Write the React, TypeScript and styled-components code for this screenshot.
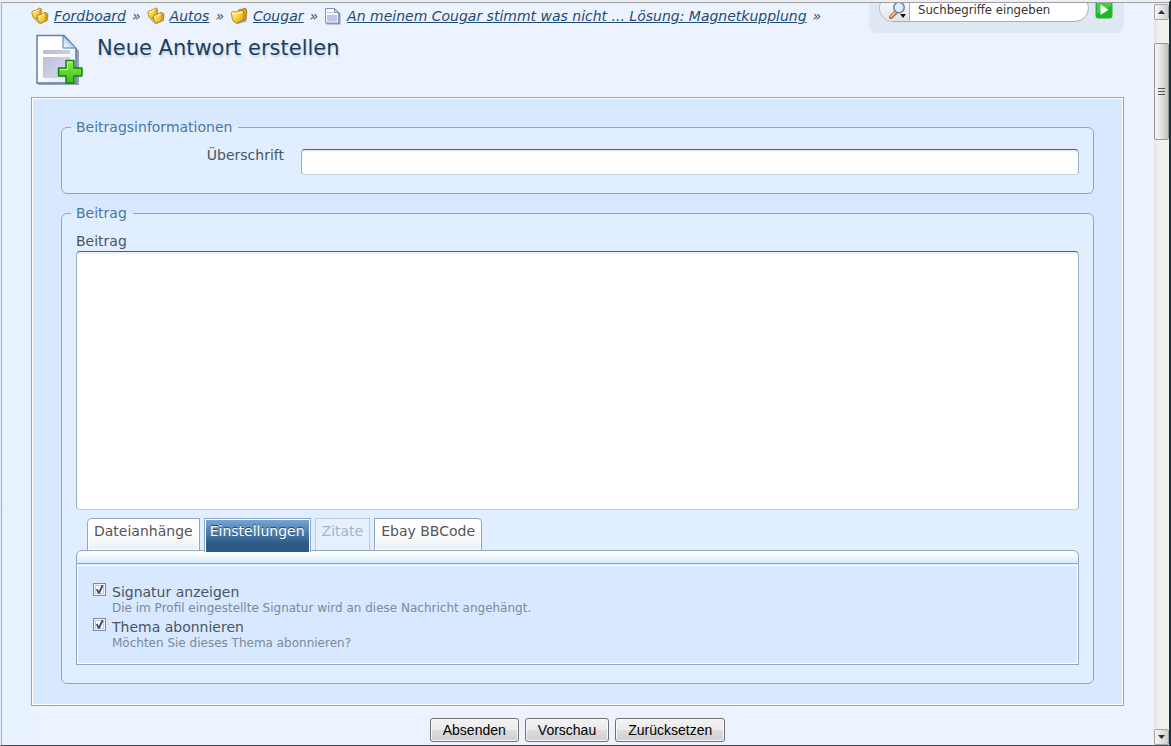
import React from 'react';
import styled, { createGlobalStyle, css } from 'styled-components';

const GlobalStyle = createGlobalStyle`
  *, *::before, *::after { box-sizing: border-box; }
  body {
    margin: 0;
    background: #eaf3ff;
    color: #4a5560;
    font: 14px/16px "DejaVu Sans", Verdana, sans-serif;
  }
`;

const line = '#8fa8c2';

const Window = styled.div`
  display: flex;
  min-height: 100vh;
  border-top: 2px solid #eeeeee;
  border-right: 2px solid #1f2d40;
  border-bottom: 1px solid #444b55;
  border-left: 1px solid #e6eaf0;
`;

const Page = styled.div`
  flex: 1;
  min-width: 0;
  padding: 0 30px 3px 29px;
  overflow: hidden;
  border-top: 1px solid #9a9fa8;
  border-left: 1px solid #9fb2c8;
  background: linear-gradient(90deg, #e6f2ff, #ecf3ff 60px);
`;

const Header = styled.header`
  display: flex;
  justify-content: space-between;
  align-items: flex-start;
  height: 31px;
`;

const Crumbs = styled.ol`
  display: flex;
  gap: 6px;
  margin: 0;
  padding: 4px 0 0;
  list-style: none;
  white-space: nowrap;
`;

const Crumb = styled.li`
  display: flex;
  align-items: center;
  gap: 5px;
  height: 18px;
  svg { flex: none; }
`;

const CrumbLink = styled.a`
  color: #1f4b73;
  font-style: italic;
  text-decoration: underline;
`;

const Separator = styled.span`
  padding-left: 1px;
  font-style: italic;
`;

const Search = styled.form`
  display: flex;
  gap: 6px;
  width: 255px;
  flex: none;
  margin-top: -12px;
  padding: 3px 10px 11px;
  border-radius: 8px;
  background: #dde8f3;
`;

const Pill = styled.div`
  display: flex;
  width: 210px;
  height: 28px;
  overflow: hidden;
  border: 1px solid #a9b0b8;
  border-radius: 14px;
  background: #ffffff;
`;

const SearchScope = styled.button`
  width: 30px;
  padding: 6px 0 0 5px;
  border: 0;
  border-right: 1px solid #a9b0b8;
  background: linear-gradient(#ffffff, #e4e4e4);
`;

const SearchInput = styled.input`
  flex: 1;
  min-width: 0;
  padding: 3px 8px 0;
  border: 0;
  background: transparent;
  color: #333333;
  font: 13px/16px "DejaVu Sans Condensed", "DejaVu Sans", sans-serif;
  &::placeholder { color: #333333; opacity: 1; }
`;

const GoButton = styled.button`
  align-self: center;
  width: 18px;
  height: 18px;
  margin-top: 3px;
  padding: 0;
  border: 0;
  background: none;
`;

const TitleRow = styled.div`
  display: flex;
  gap: 14px;
  height: 63px;
  padding-left: 3px;
`;

const Title = styled.h1`
  margin: 2px 0 0;
  color: #1c3e5c;
  font-size: 21px;
  font-weight: 400;
  line-height: 24px;
  text-shadow: 1px 2px 2px #c4d2e0;
`;

const Frame = styled.div`
  padding: 21px 29px;
  border: 1px solid ${line};
  outline: 1px solid #ffffff;
  outline-offset: -2px;
  background: #d7e8ff;
`;

const Group = styled.fieldset`
  min-width: 0;
  margin: 0;
  padding: 12px 14px 18px;
  border: 1px solid ${line};
  border-radius: 6px;
  background: #e1eeff;
  & + & { margin-top: 11px; }
`;

const Legend = styled.legend`
  margin-left: -5px;
  padding: 0 6px 0 5px;
  color: #4b77a5;
`;

const SubjectRow = styled.div`
  display: grid;
  grid-template-columns: 208px 1fr;
  gap: 17px;
`;

const SubjectLabel = styled.label`
  text-align: right;
`;

const field = css`
  display: block;
  width: 100%;
  border: 1px solid #9fb2c8;
  border-top-color: #55606c;
  border-bottom-color: #c3cedb;
  border-radius: 4px;
  background: #ffffff;
  box-shadow: inset 0 2px 2px #eeeeee;
  font: inherit;
`;

const SubjectInput = styled.input`
  ${field}
  height: 26px;
  margin-top: 2px;
`;

const MessageLabel = styled.label`
  display: block;
  margin-bottom: 2px;
`;

const Message = styled.textarea`
  ${field}
  height: 259px;
  resize: none;
`;

const Tabs = styled.div`
  display: flex;
  gap: 4px;
  margin-top: 8px;
  padding-left: 11px;
`;

const Tab = styled.button<{ $edge?: 'left' | 'right' }>`
  height: 32px;
  padding: 0 6px 8px;
  border: 1px solid ${line};
  border-bottom: 0;
  border-radius: ${p => (p.$edge === 'left' ? '5px 0 0 0' : p.$edge === 'right' ? '0 5px 0 0' : '0')};
  background: linear-gradient(#ffffff 40%, #eaf0f3);
  box-shadow: inset 0 0 0 1px #ffffff;
  color: #555555;
  font: inherit;

  &[aria-selected='true'] {
    height: 34px;
    margin-bottom: -2px;
    padding: 0 5px 10px;
    z-index: 1;
    background: linear-gradient(#79a8d6, #2a5a85 75%);
    box-shadow: inset 1px 1px #ffffff, inset -1px 0 #ffffff;
    color: #ffffff;
    text-shadow: 0 -1px #1e4770;
  }

  &:disabled {
    border-color: #b9cde3;
    background: #e6f0fc;
    box-shadow: none;
    color: #a3b5ca;
  }
`;

const PanelCap = styled.div`
  height: 14px;
  border: 1px solid ${line};
  border-radius: 6px 6px 0 0;
  background: linear-gradient(#ffffff 20%, #d4ebfb);
`;

const Panel = styled.div`
  padding: 18px 16px 12px;
  border: 1px solid ${line};
  border-top: 0;
  outline: 1px solid #ffffff;
  outline-offset: -2px;
  background: #d7e8ff;
`;

const Option = styled.div`
  display: grid;
  grid-template-columns: 13px 1fr;
  column-gap: 6px;
  height: 35px;
`;

const Check = styled.input`
  appearance: none;
  width: 13px;
  height: 13px;
  margin: 1px 0 0;
  border: 1px solid #7d8a99;
  background: #ffffff;
  box-shadow: inset 0 0 0 1px #f4f4f4, inset 0 0 0 2px #c3cad3;
  &:checked::after {
    content: '';
    display: block;
    width: 9px;
    height: 9px;
    margin: 1px;
    background: #3c4a86;
    clip-path: polygon(10% 50%, 28% 42%, 42% 66%, 74% 0, 96% 6%, 52% 96%, 34% 96%);
  }
`;

const OptionText = styled.div`
  padding-top: 2px;
`;

const Hint = styled.div`
  color: #7d8a99;
  font-size: 12px;
`;

const Actions = styled.div`
  display: flex;
  justify-content: center;
  gap: 6px;
  margin-top: 12px;
`;

const Action = styled.button`
  height: 24px;
  padding: 0 12px;
  border: 1px solid #707070;
  border-radius: 3px;
  background: linear-gradient(#f2f2f2 0, #ebebeb 50%, #dddddd 50%, #cfcfcf);
  box-shadow: inset 0 0 0 1px #fafafa;
  color: #000000;
  font: 14px/16px "Liberation Sans", Arial, sans-serif;
`;

const Scrollbar = styled.div`
  display: flex;
  flex-direction: column;
  width: 15px;
  flex: none;
  padding-top: 1px;
  border-top: 1px solid #9a9fa8;
  background: linear-gradient(90deg, #e3e3e3, #f0f0f0 4px);
`;

const ScrollArrow = styled.button`
  display: grid;
  place-items: center;
  width: 15px;
  height: 16px;
  padding: 0;
  border: 1px solid #a4a4a4;
  border-radius: 2px;
  background: linear-gradient(90deg, #f6f6f6, #cfcfcf);
`;

const Track = styled.div`
  flex: 1;
  padding-top: 23px;
`;

const Thumb = styled.div`
  display: grid;
  place-items: center;
  height: 97px;
  border: 1px solid #979797;
  border-radius: 2px;
  background: linear-gradient(90deg, #f6f6f6, #e4e4e4 45%, #c2c2c2);
`;

const GoldFill = ({ id }: { id: string }) => (
  <defs>
    <linearGradient id={id} x1="0" y1="0" x2="1" y2="1">
      <stop offset="0" stopColor="#fff3a0" />
      <stop offset="0.45" stopColor="#fbd548" />
      <stop offset="1" stopColor="#d99a14" />
    </linearGradient>
  </defs>
);

const BoardsIcon = ({ id }: { id: string }) => (
  <svg width="18" height="18" viewBox="0 0 18 18" aria-hidden="true">
    <GoldFill id={id} />
    <path d="M3 12.500 8.500 17.500 17 14 17.600 8 14 7Z" fill="#7b8496" opacity=".45" />
    <path d="M.8 4.800 2.500 3.500 4 3.600 8.500 1 10.500 2 10.800 8 4.500 12 2 10.500Z" fill={`url(#${id})`} stroke="#a87d18" strokeWidth=".8" />
    <path d="M8.500 1 10.500 2 10.800 8 8.500 9.500Z" fill="#d89c1c" />
    <path d="M6 9.300 7.800 8 9.300 8.200 14 5.400 16.800 6.600 16 13 9.500 16.400 7.200 14.600Z" fill={`url(#${id})`} stroke="#98700f" strokeWidth=".8" />
    <path d="M14 5.800 16.500 6.800 15.700 12.800 13.500 14Z" fill="#d89c1c" />
    <path d="M2 5.200 7.500 3M7.500 9.600 13 7.200" stroke="#fffbd0" />
  </svg>
);

const BoardIcon = () => (
  <svg width="18" height="18" viewBox="0 0 18 18" aria-hidden="true">
    <GoldFill id="board" />
    <path d="M3 14.500 7 17.500 16.500 15 17.500 4Z" fill="#7b8496" opacity=".45" />
    <path d="M8 4 10 2 11.500 2.600 15 1 16.600 2.500 15.600 13 7 16Z" fill="#e0a31d" stroke="#8f6a12" strokeWidth=".8" />
    <path d="M1 6 2.500 4.500 6 5 7.500 4 13.500 3.600 13.300 13 6.500 16.200 2.800 13.500Z" fill="url(#board)" stroke="#a87d18" strokeWidth=".8" />
    <path d="M2.500 6.500 6.500 6.800 12.500 4.800" fill="none" stroke="#fffbd0" />
  </svg>
);

const ThreadIcon = () => (
  <svg width="18" height="18" viewBox="0 0 18 18" aria-hidden="true">
    <path d="M2.500 2.500h9l5 4v11h-14Z" fill="#7d8698" opacity=".8" />
    <path d="M1.500 1.500h9l4 4v10.500h-13Z" fill="#f7faff" stroke="#8592a8" />
    <path d="M10.500 1.500v4h4Z" fill="#c9def5" stroke="#5f7f9e" strokeWidth=".8" />
    <path d="M3 5h6v1H3ZM3 8h10v6.500H3Z" fill="#bcc6e0" />
  </svg>
);

const AddPostIcon = () => (
  <svg width="49" height="52" viewBox="0 0 49 52" aria-hidden="true">
    <defs>
      <linearGradient id="sheet" x1="0" y1="0" x2="1" y2="1">
        <stop offset="0.4" stopColor="#ffffff" />
        <stop offset="1" stopColor="#dce4f2" />
      </linearGradient>
      <linearGradient id="lines" x1="0" y1="0" x2="1" y2="1">
        <stop offset="0" stopColor="#b5bcda" />
        <stop offset="1" stopColor="#d9ddee" />
      </linearGradient>
      <linearGradient id="fold" x1="0" y1="1" x2="1" y2="0">
        <stop offset="0" stopColor="#ffffff" />
        <stop offset="1" stopColor="#6fa9d5" />
      </linearGradient>
      <linearGradient id="plus" x1="0" y1="0" x2="0" y2="1">
        <stop offset="0" stopColor="#8df04a" />
        <stop offset="1" stopColor="#35bf16" />
      </linearGradient>
    </defs>
    <path d="M4 3h28l13 14v34H4Z" fill="#5c6b86" opacity=".6" />
    <path d="M3 1.500h27l12 13V49H3Z" fill="url(#sheet)" stroke="#6680a5" strokeWidth="1.500" />
    <path d="M29 1.500v12.500h13Z" fill="url(#fold)" stroke="#4c7ca8" />
    <path d="M9 16h27v4H9ZM9 23h27v21H9Z" fill="url(#lines)" />
    <path d="M32 26.500h8v7.500h8v8h-8V49h-8v-7h-7.500v-8H32Z" fill="url(#plus)" stroke="#16801c" strokeWidth="1.500" strokeLinejoin="round" />
    <path d="M33.500 35.500v-7.500h5M26 35.500h7.500" fill="none" stroke="#b7f98c" />
  </svg>
);

const SearchIcon = () => (
  <svg width="19" height="19" viewBox="0 0 19 19" aria-hidden="true">
    <path d="M8 11 3 16" stroke="#a86b3c" strokeWidth="4" strokeLinecap="round" />
    <path d="M8 10.500 3 15.500" stroke="#f0b487" strokeWidth="2" strokeLinecap="round" />
    <circle cx="11" cy="6.500" r="5.200" fill="#dcecfb" stroke="#6c7f9c" strokeWidth="1.500" />
    <path d="M12 13h6l-3 4Z" fill="#111111" />
  </svg>
);

const GoIcon = () => (
  <svg width="18" height="18" viewBox="0 0 18 18" aria-hidden="true">
    <rect x="1" y="1" width="16" height="16" rx="2" fill="#14bd24" stroke="#4c9c55" />
    <path d="M2 2h14v3L2 13Z" fill="#55df5a" opacity=".6" />
    <path d="M5.500 3.500v10.500l8-5.250Z" fill="#ffffff" />
  </svg>
);

const Arrow = ({ d }: { d: string }) => (
  <svg width="7" height="4" viewBox="0 0 7 4" aria-hidden="true"><path d={d} fill="#333333" /></svg>
);

const crumbs = [
  { text: 'Fordboard', icon: <BoardsIcon id="root-board" /> },
  { text: 'Autos', icon: <BoardsIcon id="cars-board" /> },
  { text: 'Cougar', icon: <BoardIcon /> },
  { text: 'An meinem Cougar stimmt was nicht ... Lösung: Magnetkupplung', icon: <ThreadIcon /> },
];

const options = [
  { id: 'signature', label: 'Signatur anzeigen', hint: 'Die im Profil eingestellte Signatur wird an diese Nachricht angehängt.' },
  { id: 'subscribe', label: 'Thema abonnieren', hint: 'Möchten Sie dieses Thema abonnieren?' },
];

export default function App() {
  return (
    <Window>
      <GlobalStyle />
      <Page>
        <Header>
          <nav>
            <Crumbs>
              {crumbs.map(c => (
                <Crumb key={c.text}>
                  {c.icon}
                  <CrumbLink href="#">{c.text}</CrumbLink>
                  <Separator>»</Separator>
                </Crumb>
              ))}
            </Crumbs>
          </nav>
          <Search>
            <Pill>
              <SearchScope type="button" aria-label="Suchoptionen"><SearchIcon /></SearchScope>
              <SearchInput type="text" aria-label="Suche" placeholder="Suchbegriffe eingeben" />
            </Pill>
            <GoButton type="submit" aria-label="Suchen"><GoIcon /></GoButton>
          </Search>
        </Header>
        <main>
          <TitleRow>
            <AddPostIcon />
            <Title>Neue Antwort erstellen</Title>
          </TitleRow>
          <form>
            <Frame>
              <Group>
                <Legend>Beitragsinformationen</Legend>
                <SubjectRow>
                  <SubjectLabel htmlFor="subject">Überschrift</SubjectLabel>
                  <SubjectInput id="subject" type="text" />
                </SubjectRow>
              </Group>
              <Group>
                <Legend>Beitrag</Legend>
                <MessageLabel htmlFor="message">Beitrag</MessageLabel>
                <Message id="message" />
                <Tabs role="tablist">
                  <Tab type="button" role="tab" $edge="left">Dateianhänge</Tab>
                  <Tab type="button" role="tab" aria-selected="true">Einstellungen</Tab>
                  <Tab type="button" role="tab" disabled>Zitate</Tab>
                  <Tab type="button" role="tab" $edge="right">Ebay BBCode</Tab>
                </Tabs>
                <PanelCap />
                <Panel role="tabpanel">
                  {options.map(o => (
                    <Option key={o.id}>
                      <Check id={o.id} type="checkbox" defaultChecked />
                      <OptionText>
                        <label htmlFor={o.id}>{o.label}</label>
                        <Hint>{o.hint}</Hint>
                      </OptionText>
                    </Option>
                  ))}
                </Panel>
              </Group>
            </Frame>
            <Actions>
              <Action type="submit">Absenden</Action>
              <Action type="button">Vorschau</Action>
              <Action type="reset">Zurücksetzen</Action>
            </Actions>
          </form>
        </main>
      </Page>
      <Scrollbar>
        <ScrollArrow type="button" aria-label="Nach oben"><Arrow d="M0 4 3.500 0 7 4Z" /></ScrollArrow>
        <Track>
          <Thumb>
            <svg width="8" height="8" viewBox="0 0 8 8" aria-hidden="true"><path d="M0 .5h7M0 3.500h7M0 6.500h7" stroke="#555555" /></svg>
          </Thumb>
        </Track>
        <ScrollArrow type="button" aria-label="Nach unten"><Arrow d="M0 0 3.500 4 7 0Z" /></ScrollArrow>
      </Scrollbar>
    </Window>
  );
}
